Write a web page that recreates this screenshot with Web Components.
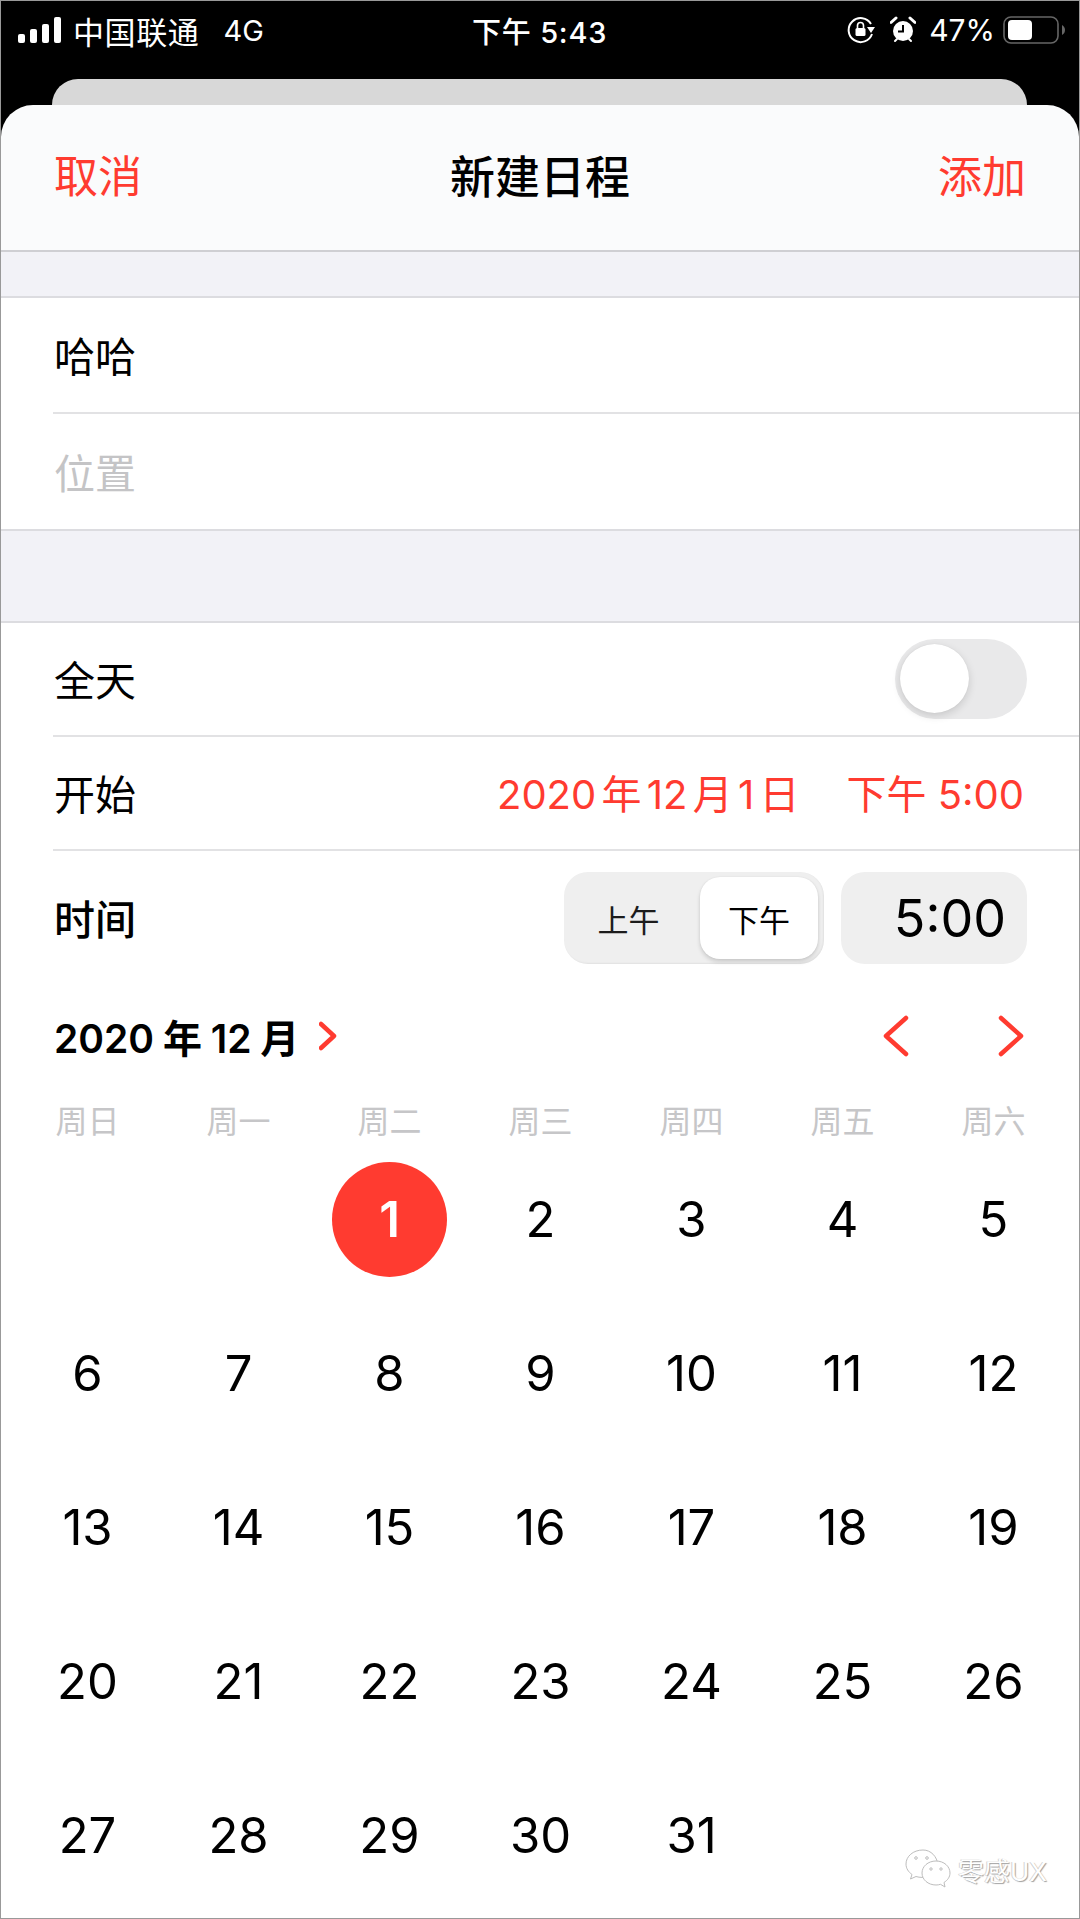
<!DOCTYPE html>
<html lang="zh">
<head>
<meta charset="utf-8">
<title>新建日程</title>
<style>
  html, body { margin: 0; padding: 0; background: #fff; }
  body { font-family: Inter, "Noto Sans CJK SC", sans-serif; color: #000; }
</style>
</head>
<body>
<event-screen>
  <status-bar></status-bar>
  <nav-bar title="新建日程" left="取消" right="添加"></nav-bar>
  <form-gap size="46"></form-gap>
  <form-row height="116" inset><span>哈哈</span></form-row>
  <form-row height="117"><span style="color:#c4c4c6">位置</span></form-row>
  <form-gap size="92"></form-gap>
  <form-row height="114" inset><span>全天</span><toggle-switch slot="end"></toggle-switch></form-row>
  <form-row height="114" inset>
    <span>开始</span>
    <start-value slot="end" date="2020 年 12 月 1 日" time="下午 5:00"></start-value>
  </form-row>
  <time-row></time-row>
  <month-head label="2020 年 12 月"></month-head>
  <week-head></week-head>
  <day-grid></day-grid>
  <wx-mark name="零感UX"></wx-mark>
</event-screen>

<script>
const RED = '#ff3b30';

class EventScreen extends HTMLElement {
  constructor() {
    super();
    this.attachShadow({ mode: 'open' });
    this.shadowRoot.innerHTML = `
      <style>
        :host{
          display:block;
          position:relative;
          box-sizing:border-box;
          width:1080px;
          height:1919px;
          overflow:hidden;
          background:linear-gradient(#000 0 140px, #fff 140px);
          border:1px solid #999;
        }
      </style>
      <slot></slot>`;
  }
}

class StatusBar extends HTMLElement {
  constructor() {
    super();
    this.attachShadow({ mode: 'open' });
    this.shadowRoot.innerHTML = `
      <style>
        :host{ display:block; background:#000; color:#fff; height:104px; }
        *{ box-sizing:border-box; }
        .bar{
          height:78px;
          display:flex;
          align-items:center;
          justify-content:space-between;
          padding:0 14px 20px 17px;
          position:relative;
          font-size:31px;
        }
        .side{ display:flex; align-items:center; }
        .carrier{ margin-left:10px; letter-spacing:.6px; }
        .net{ margin-left:24px; font-size:29px; }
        .clock{
          position:absolute;
          left:471px;
          top:8px;
          font-size:29px;
          font-weight:500;
          letter-spacing:.8px;
        }
        .pct{ margin:0 8px 0 13px; font-size:30px; }
        svg{ display:block; }
        .peek{
          height:26px;
          margin:0 52px 0 51px;
          background:#d8d8d8;
          border-radius:26px 26px 0 0;
        }
      </style>
      <div class="bar">
        <div class="side">
          <svg width="45" height="28" viewBox="0 0 45 28" fill="#fff">
            <rect x="0" y="18" width="7" height="9" rx="2"/>
            <rect x="12" y="13" width="7" height="14" rx="2"/>
            <rect x="24" y="8" width="7" height="19" rx="2"/>
            <rect x="36" y="1" width="7" height="26" rx="2"/>
          </svg>
          <span class="carrier">中国联通</span>
          <span class="net">4G</span>
        </div>
        <span class="clock">下午 5:43</span>
        <div class="side">
          <svg width="28" height="28" viewBox="0 0 28 28" fill="none">
            <path d="M24 8A12 12 0 1 0 25 18" stroke="#fff" stroke-width="2"/>
            <path d="M20 11h8l-4 6z" fill="#fff"/>
            <rect x="8.500" y="12" width="10" height="8" rx="1.500" fill="#fff"/>
            <path d="M10.500 12V9.500a3 3 0 0 1 6 0V12" stroke="#fff" stroke-width="1.600"/>
          </svg>
          <svg style="margin-left:15px" width="26" height="28" viewBox="0 0 26 28" fill="none">
            <circle cx="13" cy="15" r="10" fill="#fff"/>
            <path d="M13 9v6.500H8" stroke="#000" stroke-width="2"/>
            <path d="M1 6.500 6 2M25 6.500 20 2" stroke="#fff" stroke-width="3" stroke-linecap="round"/>
            <path d="M5 25l2-2M21 25l-2-2" stroke="#fff" stroke-width="2" stroke-linecap="round"/>
          </svg>
          <span class="pct">47%</span>
          <svg width="62" height="30" viewBox="0 0 62 30" fill="none">
            <rect x="1" y="2" width="54" height="26" rx="7" stroke="#666" stroke-width="1.600"/>
            <rect x="5" y="5" width="24" height="20" rx="4" fill="#fff"/>
            <path d="M59 10c2 1 3 3 3 5s-1 4-3 5z" fill="#666"/>
          </svg>
        </div>
      </div>
      <div class="peek"></div>`;
  }
}

class NavBar extends HTMLElement {
  constructor() {
    super();
    this.attachShadow({ mode: 'open' });
  }

  connectedCallback() {
    this.shadowRoot.innerHTML = `
      <style>
        :host{
          display:block;
          height:147px;
          box-sizing:border-box;
          background:#fafbfc;
          border-bottom:2px solid #cfcfd3;
          border-radius:32px 32px 0 0;
          position:relative;
        }
        .row{
          box-sizing:border-box;
          height:100%;
          display:flex;
          align-items:center;
          justify-content:space-between;
          padding:0 53px 7px 53px;
          font-size:44px;
          color:${RED};
        }
        .title{
          position:absolute;
          left:0; right:0; top:0; bottom:6px;
          display:flex;
          align-items:center;
          justify-content:center;
          color:#000;
          font-size:45px;
          font-weight:500;
        }
        .row span{ position:relative; }
      </style>
      <div class="title">${this.getAttribute('title')}</div>
      <div class="row"><span>${this.getAttribute('left')}</span><span>${this.getAttribute('right')}</span></div>`;
  }
}

class FormGap extends HTMLElement {
  constructor() {
    super();
    this.attachShadow({ mode: 'open' });
  }

  connectedCallback() {
    this.shadowRoot.innerHTML = `
      <style>
        :host{
          display:block;
          box-sizing:border-box;
          height:${this.getAttribute('size')}px;
          background:#f2f2f7;
          border-bottom:2px solid #dcdce0;
        }
      </style>`;
  }
}

class FormRow extends HTMLElement {
  constructor() {
    super();
    this.attachShadow({ mode: 'open' });
  }

  connectedCallback() {
    this.shadowRoot.innerHTML = `
      <style>
        :host{ display:block; background:#fff; font-size:41px; }
        .inner{
          box-sizing:border-box;
          height:${this.getAttribute('height')}px;
          margin-left:${this.hasAttribute('inset') ? 52 : 0}px;
          padding:0 52px 2px ${this.hasAttribute('inset') ? 1 : 53}px;
          display:flex;
          align-items:center;
          justify-content:space-between;
          border-bottom:2px solid ${this.hasAttribute('inset') ? '#e2e2e4' : '#dcdce0'};
        }
      </style>
      <div class="inner"><slot></slot><slot name="end"></slot></div>`;
  }
}

class ToggleSwitch extends HTMLElement {
  constructor() {
    super();
    this.attachShadow({ mode: 'open' });
    this.shadowRoot.innerHTML = `
      <style>
        :host{
          display:block;
          position:relative;
          width:132px;
          height:80px;
          margin-top:2px;
          border-radius:40px;
          background:#e9e9ea;
        }
        .knob{
          position:absolute;
          left:5px;
          top:5px;
          width:69px;
          height:69px;
          border-radius:50%;
          background:#fff;
          box-shadow:0 3px 8px rgba(0,0,0,.14), 0 0 1px rgba(0,0,0,.1);
        }
      </style>
      <div class="knob"></div>`;
  }
}

class StartValue extends HTMLElement {
  constructor() {
    super();
    this.attachShadow({ mode: 'open' });
  }

  connectedCallback() {
    this.shadowRoot.innerHTML = `
      <style>
        :host{ display:flex; gap:47px; color:${RED}; font-size:40px; white-space:pre; margin-right:3px; }
        .date{ word-spacing:-6px; }
      </style>
      <span class="date">${this.getAttribute('date')}</span><span>${this.getAttribute('time')}</span>`;
  }
}

class TimeRow extends HTMLElement {
  constructor() {
    super();
    this.attachShadow({ mode: 'open' });
    this.shadowRoot.innerHTML = `
      <style>
        :host{
          display:flex;
          align-items:center;
          justify-content:space-between;
          box-sizing:border-box;
          height:134px;
          padding:20px 52px 20px 53px;
          font-size:41px;
        }
        .label{ font-weight:500; margin-top:-3px; }
        .controls{ display:flex; gap:17px; }
        .seg{
          box-sizing:border-box;
          width:260px;
          height:92px;
          padding:5px 6px 5px 5px;
          display:flex;
          background:#efefef;
          border-radius:24px;
          font-size:31px;
          box-shadow:inset -1px -1px 2px rgba(0,0,0,.06);
        }
        .seg span{
          flex:1;
          display:flex;
          align-items:center;
          justify-content:center;
        }
        .seg .ampm-off{ flex:0 0 131px; box-sizing:border-box; padding-right:12px; color:#1c1c1c; }
        .seg .ampm-on{
          background:#fff;
          border-radius:20px;
          box-shadow:0 3px 4px rgba(0,0,0,.14), 0 0 2px rgba(0,0,0,.08);
        }
        .value{
          box-sizing:border-box;
          width:186px;
          height:92px;
          padding-right:21px;
          display:flex;
          align-items:center;
          justify-content:flex-end;
          background:#efefef;
          border-radius:24px;
          font-size:52px;
        }
      </style>
      <span class="label">时间</span>
      <div class="controls">
        <div class="seg"><span class="ampm-off">上午</span><span class="ampm-on">下午</span></div>
        <div class="value">5:00</div>
      </div>`;
  }
}

class MonthHead extends HTMLElement {
  constructor() {
    super();
    this.attachShadow({ mode: 'open' });
  }

  connectedCallback() {
    this.shadowRoot.innerHTML = `
      <style>
        :host{
          display:flex;
          align-items:center;
          justify-content:space-between;
          height:80px;
          margin-top:11px;
          padding:0 53px 0 53px;
        }
        .title{
          display:flex;
          align-items:center;
          gap:20px;
          font-size:39px;
          font-weight:600;
          word-spacing:-1px;
        }
        .arrows{ display:flex; gap:85px; }
        svg{ display:block; fill:none; stroke:${RED}; stroke-linecap:round; stroke-linejoin:round; }
      </style>
      <div class="title">
        <span>${this.getAttribute('label')}</span>
        <svg width="18" height="30" viewBox="0 0 18 30" stroke-width="4.500"><path d="M2 3l13 12L2 27"/></svg>
      </div>
      <div class="arrows">
        <svg width="30" height="42" viewBox="0 0 30 42" stroke-width="4.500"><path d="M25 3 5 21l20 18"/></svg>
        <svg width="30" height="42" viewBox="0 0 30 42" stroke-width="4.500"><path d="M5 3l20 18L5 39"/></svg>
      </div>`;
  }
}

class WeekHead extends HTMLElement {
  constructor() {
    super();
    this.attachShadow({ mode: 'open' });
    const names = ['周日', '周一', '周二', '周三', '周四', '周五', '周六'];
    this.shadowRoot.innerHTML = `
      <style>
        :host{
          display:grid;
          grid-template-columns:repeat(7, 151px);
          padding:0 0 0 11px;
          height:42px;
          margin:20px 0 4px;
          align-items:center;
          font-size:32px;
          color:#c6c6c8;
          text-align:center;
        }
      </style>
      ${names.map(n => `<span>${n}</span>`).join('')}`;
  }
}

class DayGrid extends HTMLElement {
  constructor() {
    super();
    this.attachShadow({ mode: 'open' });
    let cells = '<span></span><span></span>';
    for (let d = 1; d <= 31; d++) {
      cells += `<span class="${d === 1 ? 'today' : ''}"><b>${d}</b></span>`;
    }
    this.shadowRoot.innerHTML = `
      <style>
        :host{
          display:grid;
          grid-template-columns:repeat(7, 151px);
          grid-auto-rows:154px;
          padding:0 0 0 11px;
          font-size:49px;
        }
        span{ display:flex; align-items:center; justify-content:center; }
        b{ font-weight:400; }
        .today b{
          width:115px;
          height:115px;
          border-radius:50%;
          background:${RED};
          color:#fff;
          font-weight:600;
          display:flex;
          align-items:center;
          justify-content:center;
        }
      </style>
      ${cells}`;
  }
}

class WxMark extends HTMLElement {
  constructor() {
    super();
    this.attachShadow({ mode: 'open' });
  }

  connectedCallback() {
    this.shadowRoot.innerHTML = `
      <style>
        :host{
          position:absolute;
          left:904px;
          top:1848px;
          display:flex;
          align-items:center;
          gap:7px;
          font-size:26px;
          color:#fff;
          text-shadow:1px 1px 1px #a0a0a0, -1px 0 0 #d4d4d4;
          white-space:nowrap;
        }
        svg{ display:block; }
      </style>
      <svg width="46" height="40" viewBox="0 0 46 40" fill="#fff" stroke="#bdbdbd" stroke-width="1">
        <path d="M18 1C8 1 1 7.500 1 15c0 4.500 2.500 8 6 10.500L5.500 30 11 27.500c2 .6 4 .9 6 .9C24 28.400 32 24 33 16 32 7.500 26 1 18 1z"/>
        <path d="M31 12c-8 0-14 5.400-14 12s6 12 14 12c1.700 0 3-.2 4.500-.7L40 38l-1-4.500c3.500-2.200 6-5.500 6-9.500 0-6.600-6-12-14-12z"/>
        <circle cx="11" cy="9" r="1.300"/><circle cx="22" cy="9" r="1.300"/>
        <circle cx="26" cy="20" r="1.200"/><circle cx="36" cy="20" r="1.200"/>
      </svg>
      <span>${this.getAttribute('name')}</span>`;
  }
}

customElements.define('event-screen', EventScreen);
customElements.define('status-bar', StatusBar);
customElements.define('nav-bar', NavBar);
customElements.define('form-gap', FormGap);
customElements.define('form-row', FormRow);
customElements.define('toggle-switch', ToggleSwitch);
customElements.define('start-value', StartValue);
customElements.define('time-row', TimeRow);
customElements.define('month-head', MonthHead);
customElements.define('week-head', WeekHead);
customElements.define('day-grid', DayGrid);
customElements.define('wx-mark', WxMark);
</script>
</body>
</html>
